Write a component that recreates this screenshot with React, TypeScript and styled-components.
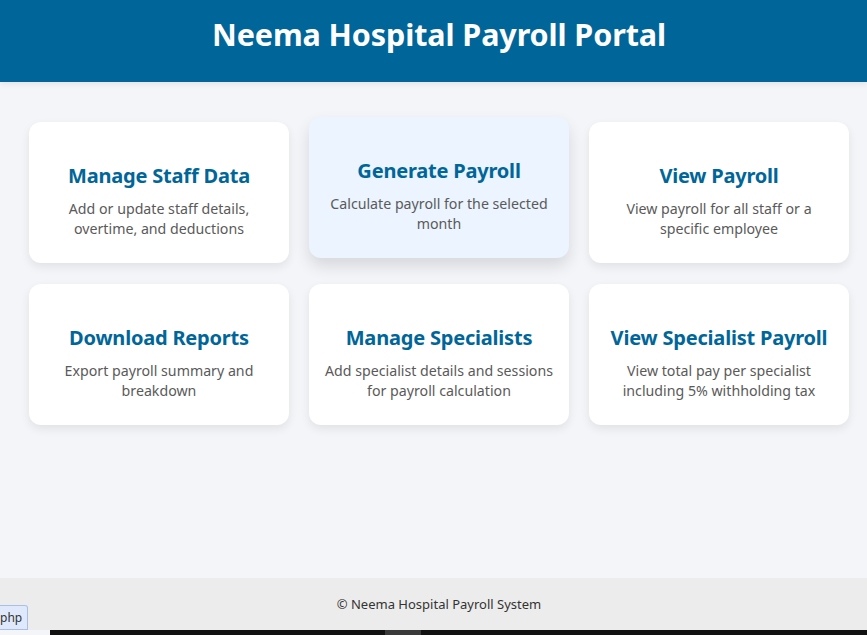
import styled, { createGlobalStyle } from "styled-components";

const GlobalStyle = createGlobalStyle`
  html, body {
    margin: 0;
    padding: 0;
    overflow: hidden;
  }
  body {
    font-family: "Noto Sans", "Open Sans", sans-serif;
    background: #f4f5f9;
  }
`;

const Page = styled.div`
  min-height: 635px;
  display: flex;
  flex-direction: column;
  position: relative;
`;

const Header = styled.header`
  background-color: #006699;
  height: 82px;
  padding-left: 11px;
  display: flex;
  justify-content: center;
  box-shadow: 0 2px 6px rgba(0, 0, 0, 0.08);
`;

const Title = styled.h1`
  margin: 0;
  padding-top: 13px;
  color: #ffffff;
  font-size: 30.5px;
  font-weight: 700;
  letter-spacing: -0.1px;
`;

const Main = styled.main`
  flex: 1;
  padding: 40px 18px 0 29px;
`;

const Grid = styled.div`
  display: grid;
  grid-template-columns: repeat(3, 1fr);
  gap: 21px 20px;
`;

const Card = styled.div<{ $active?: boolean }>`
  height: 141px;
  box-sizing: border-box;
  padding: 40px 13px 0;
  border-radius: 12px;
  text-align: center;
  background-color: ${(p) => (p.$active ? "#ebf4ff" : "#ffffff")};
  box-shadow: ${(p) =>
    p.$active
      ? "0 8px 16px rgba(0, 0, 0, 0.12)"
      : "0 4px 10px rgba(0, 0, 0, 0.08)"};
  transform: ${(p) => (p.$active ? "translateY(-5px)" : "none")};
`;

const CardTitle = styled.h2`
  margin: 0 0 9px;
  color: #006699;
  font-size: 20px;
  line-height: 28px;
  font-weight: 700;
  letter-spacing: -0.2px;
`;

const CardText = styled.p`
  margin: 0;
  color: #5a5a5a;
  font-size: 14.2px;
  line-height: 20px;
`;

const Footer = styled.footer`
  height: 52px;
  background-color: #ececec;
  display: flex;
  align-items: center;
  justify-content: center;
  padding-left: 11px;
  color: #333333;
  font-size: 13px;
`;

const BottomBar = styled.div`
  height: 5px;
  background: #111111;
  margin-left: 50px;
  display: flex;
`;

const BarThumb = styled.span`
  margin-left: 335px;
  width: 36px;
  background: #3a3a3a;
`;

const StatusBubble = styled.div`
  position: absolute;
  left: 0;
  bottom: 5px;
  padding: 3px 5px 3px 0;
  background: #dfe9fb;
  border: 1px solid #a8c0e8;
  border-left: none;
  border-radius: 0 3px 0 0;
  font-size: 12px;
  color: #333;
`;

const cards = [
  {
    title: "Manage Staff Data",
    text: "Add or update staff details, overtime, and deductions",
  },
  {
    title: "Generate Payroll",
    text: "Calculate payroll for the selected month",
    active: true,
  },
  {
    title: "View Payroll",
    text: "View payroll for all staff or a specific employee",
  },
  {
    title: "Download Reports",
    text: "Export payroll summary and breakdown",
  },
  {
    title: "Manage Specialists",
    text: "Add specialist details and sessions for payroll calculation",
  },
  {
    title: "View Specialist Payroll",
    text: "View total pay per specialist including 5% withholding tax",
  },
];

function App() {
  return (
    <Page>
      <GlobalStyle />
      <Header>
        <Title>Neema Hospital Payroll Portal</Title>
      </Header>
      <Main>
        <Grid>
          {cards.map((c) => (
            <Card key={c.title} $active={c.active}>
              <CardTitle>{c.title}</CardTitle>
              <CardText>{c.text}</CardText>
            </Card>
          ))}
        </Grid>
      </Main>
      <Footer>© Neema Hospital Payroll System</Footer>
      <BottomBar>
        <BarThumb />
      </BottomBar>
      <StatusBubble>php</StatusBubble>
    </Page>
  );
}

export default App;
